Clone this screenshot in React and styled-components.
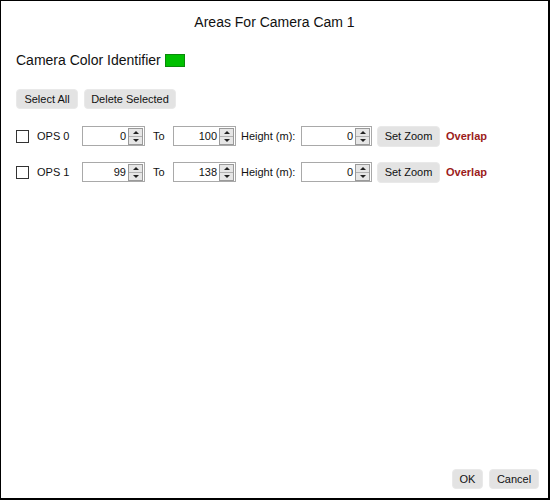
import styled, { createGlobalStyle } from 'styled-components';

const GlobalStyle = createGlobalStyle`
  html, body {
    margin: 0;
    padding: 0;
    background: #ffffff;
  }
  * {
    box-sizing: border-box;
  }
`;

const Dialog = styled.div`
  width: 550px;
  height: 500px;
  border: 1px solid #000;
  border-right-width: 2px;
  border-bottom-width: 2px;
  display: flex;
  flex-direction: column;
  font-family: 'Liberation Sans', Arial, sans-serif;
  color: #111;
  background: #fff;
`;

const Title = styled.div`
  margin-top: 13px;
  text-align: center;
  font-size: 14px;
  line-height: 16px;
`;

const IdentifierRow = styled.div`
  display: flex;
  align-items: center;
  margin-top: 22px;
  padding-left: 15px;
  font-size: 14px;
  line-height: 16px;
`;

const ColorSwatch = styled.span`
  display: inline-block;
  width: 20px;
  height: 13px;
  margin-left: 4px;
  background: ${(p) => p.color};
  border: 1px solid #0a8a0a;
`;

const Toolbar = styled.div`
  display: flex;
  gap: 6px;
  margin-top: 21px;
  padding-left: 15px;
`;

const Button = styled.button`
  height: ${(p) => p.$h || 20}px;
  width: ${(p) => (p.$w ? `${p.$w}px` : 'auto')};
  margin-left: ${(p) => p.$ml || 0}px;
  padding: 0;
  border: 1px solid #e9e9e9;
  border-radius: 4px;
  background: #e3e3e3;
  font-family: 'Liberation Sans', Arial, sans-serif;
  font-size: 11px;
  color: #111;
  white-space: nowrap;
  cursor: pointer;
`;

const AreaList = styled.div`
  display: flex;
  flex-direction: column;
  gap: 16px;
  margin-top: 17px;
`;

const Row = styled.div`
  display: flex;
  align-items: center;
  height: 20px;
  padding-left: 15px;
  font-size: 11px;
`;

const CheckBox = styled.span`
  width: 13px;
  height: 13px;
  border: 1px solid #333;
  background: #fff;
  margin-right: 8px;
  flex-shrink: 0;
`;

const Word = styled.span`
  width: ${(p) => p.$w}px;
  padding-left: ${(p) => p.$pl || 0}px;
  flex-shrink: 0;
  white-space: nowrap;
`;

const Field = styled.div`
  display: flex;
  align-items: center;
  width: ${(p) => p.$w}px;
  height: 20px;
  border: 1px solid #a9a9a9;
  background: #fff;
  flex-shrink: 0;
`;

const FieldValue = styled.span`
  flex: 1;
  text-align: right;
  padding-right: 2px;
  font-size: 11px;
`;

const Spinner = styled.div`
  display: flex;
  flex-direction: column;
  width: 15px;
  height: 17px;
  margin-right: 1px;
  border: 1px solid #9a9a9a;
  background: #e6e6e6;
`;

const SpinHalf = styled.div`
  flex: 1;
  display: flex;
  align-items: center;
  justify-content: center;
  border-top: ${(p) => (p.$down ? '1px solid #b0b0b0' : 'none')};
`;

const Arrow = styled.span`
  width: 0;
  height: 0;
  border-left: 3px solid transparent;
  border-right: 3px solid transparent;
  ${(p) => (p.$down ? 'border-top: 3px solid #222;' : 'border-bottom: 3px solid #222;')}
`;

const Overlap = styled.span`
  margin-left: 6px;
  font-weight: bold;
  color: #9b1b1b;
`;

const Footer = styled.div`
  margin-top: auto;
  display: flex;
  justify-content: flex-end;
  gap: 6px;
  padding: 0 9px 9px 0;
`;

function NumberField({ value, width }) {
  return (
    <Field $w={width}>
      <FieldValue>{value}</FieldValue>
      <Spinner>
        <SpinHalf><Arrow /></SpinHalf>
        <SpinHalf $down><Arrow $down /></SpinHalf>
      </Spinner>
    </Field>
  );
}

const areas = [
  { name: 'OPS 0', from: 0, to: 100, height: 0 },
  { name: 'OPS 1', from: 99, to: 138, height: 0 },
];

export default function App() {
  return (
    <>
      <GlobalStyle />
      <Dialog>
        <Title>Areas For Camera Cam 1</Title>
        <IdentifierRow>
          Camera Color Identifier
          <ColorSwatch color="#00c000" />
        </IdentifierRow>
        <Toolbar>
          <Button $w={62}>Select All</Button>
          <Button $w={92}>Delete Selected</Button>
        </Toolbar>
        <AreaList>
          {areas.map((a) => (
            <Row key={a.name}>
              <CheckBox />
              <Word $w={45}>{a.name}</Word>
              <NumberField value={a.from} width={63} />
              <Word $w={28} $pl={8}>To</Word>
              <NumberField value={a.to} width={63} />
              <Word $w={65} $pl={5}>Height (m):</Word>
              <NumberField value={a.height} width={71} />
              <Button $ml={5} $w={63} $h={21}>Set Zoom</Button>
              <Overlap>Overlap</Overlap>
            </Row>
          ))}
        </AreaList>
        <Footer>
          <Button $w={31}>OK</Button>
          <Button $w={50}>Cancel</Button>
        </Footer>
      </Dialog>
    </>
  );
}
